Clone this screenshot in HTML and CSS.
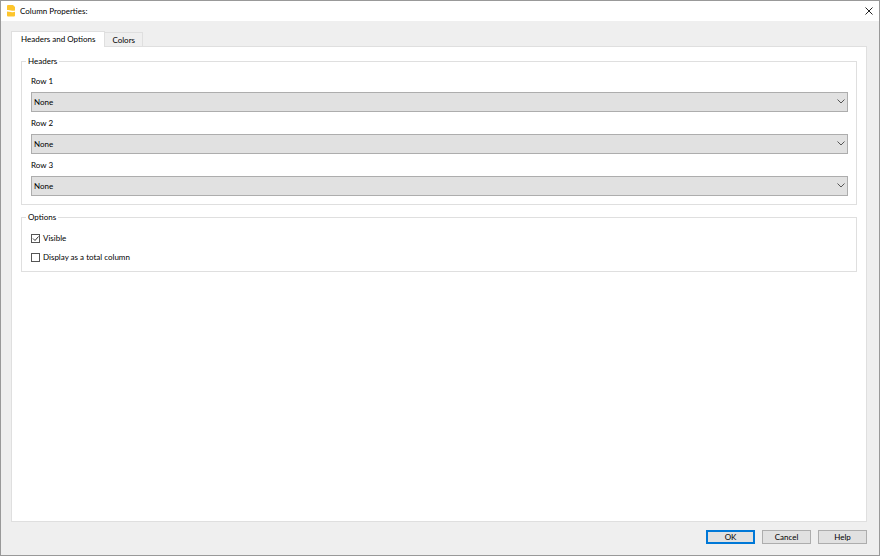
FILE: index.html
```html
<!DOCTYPE html>
<html lang="en">
    <head>
        <meta charset="utf-8">
        <title>Column Properties</title>
        <link rel="stylesheet" href="styles.css">
    </head>
    <body>
        <div class="window">

            <!-- Title bar -->
            <header class="titlebar">
                <svg class="logo" viewBox="0 0 10 12">
                    <path fill="#fdc52c" d="M2 0H7l2 2v3.500Q7 6 5 5.400T1 5V1q0-1 1-1z"/>
                    <path fill="#fdc52c" d="M1 6.400q2 0 4 .6t4-.2v3.700q0 1-1 1H2q-1 0-1-1z"/>
                </svg>
                <h1 class="title">Column Properties:</h1>
                <button class="close" type="button" aria-label="Close">
                    <svg viewBox="0 0 8 8"><path d="M.5.5l7 7M7.5.5l-7 7"/></svg>
                </button>
            </header>

            <form class="content">
                <div class="tabs" role="tablist">
                    <button class="tab active" type="button" role="tab" aria-selected="true">Headers and Options</button>
                    <button class="tab" type="button" role="tab" aria-selected="false">Colors</button>
                </div>

                <div class="panel" role="tabpanel">
                    <fieldset class="group headers">
                        <legend>Headers</legend>
                        <label for="row1">Row 1</label>
                        <div class="dropdown">
                            <select id="row1"><option>None</option></select>
                            <svg viewBox="0 0 8 5"><path d="M.5.5L4 4 7.5.5"/></svg>
                        </div>
                        <label for="row2">Row 2</label>
                        <div class="dropdown">
                            <select id="row2"><option>None</option></select>
                            <svg viewBox="0 0 8 5"><path d="M.5.5L4 4 7.5.5"/></svg>
                        </div>
                        <label for="row3">Row 3</label>
                        <div class="dropdown">
                            <select id="row3"><option>None</option></select>
                            <svg viewBox="0 0 8 5"><path d="M.5.5L4 4 7.5.5"/></svg>
                        </div>
                    </fieldset>

                    <fieldset class="group options">
                        <legend>Options</legend>
                        <div class="check">
                            <input type="checkbox" id="visible" checked>
                            <label for="visible">Visible</label>
                        </div>
                        <div class="check">
                            <input type="checkbox" id="total">
                            <label for="total">Display as a total column</label>
                        </div>
                    </fieldset>
                </div>

                <div class="buttons">
                    <button class="button default" type="submit">OK</button>
                    <button class="button" type="button">Cancel</button>
                    <button class="button" type="button">Help</button>
                </div>
            </form>
        </div>
    </body>
</html>
```

FILE: styles.css
```css
* {
    box-sizing: border-box;
}

body {
    margin: 0;
    font-family: Lato, "Open Sans", sans-serif;
    font-size: 8px;
    line-height: 12px;
    color: #000;
}

button, select, input {
    font: inherit;
    color: inherit;
    margin: 0;
}

.window {
    display: flex;
    flex-direction: column;
    min-height: 100vh;
    border: 1px solid #999;
    background-color: #efefef;
}

/* Title bar */
.titlebar {
    display: flex;
    align-items: center;
    height: 20px;
    padding: 0 6px 0 5px;
    background-color: #fff;
}

.logo {
    width: 10px;
    height: 12px;
}

.title {
    flex: 1;
    margin: 0 0 0 4px;
    font-size: 8px;
    font-weight: normal;
}

.close {
    display: flex;
    padding: 0;
    border: 0;
    background: none;
}

.close svg {
    width: 8px;
    height: 8px;
    fill: none;
    stroke: #222;
}

/* Tabs */
.content {
    flex: 1;
    display: flex;
    flex-direction: column;
    padding: 10px 12px 11px 10px;
}

.tabs {
    display: flex;
    align-items: flex-end;
}

.tab {
    height: 14px;
    padding: 0 7px;
    border: 1px solid #dfdfdf;
    border-bottom: 0;
    border-left: 0;
    background-color: #efefef;
}

.tab.active {
    position: relative;
    height: 16px;
    margin-bottom: -1px;
    padding: 0 9px 1px;
    border-left: 1px solid #dfdfdf;
    background-color: #fff;
}

.panel {
    flex: 1;
    padding: 8px 9px;
    border: 1px solid #dfdfdf;
    background-color: #fff;
}

/* Group boxes */
.group {
    min-width: 0;
    margin: 0 0 6px;
    border: 1px solid #dfdfdf;
}

.group legend {
    margin-left: -5px;
    padding: 0 2px;
}

.headers {
    padding: 6px 8px 8px 9px;
}

.headers > label {
    display: block;
    padding: 2px 0 5px;
}

.headers > label ~ label {
    padding-top: 5px;
}

.dropdown {
    position: relative;
}

.dropdown select {
    display: block;
    width: 100%;
    height: 20px;
    padding: 0 2px;
    border: 1px solid #adadad;
    border-radius: 0;
    background-color: #e1e1e1;
    appearance: none;
}

.dropdown svg {
    position: absolute;
    top: 7px;
    right: 3px;
    width: 8px;
    height: 5px;
    fill: none;
    stroke: #555;
    pointer-events: none;
}

.options {
    padding: 9px 9px 8px;
}

.check {
    display: flex;
    align-items: center;
    gap: 3px;
}

.check + .check {
    margin-top: 7px;
}

.check input {
    width: 9px;
    height: 9px;
    border: 1px solid #555;
    background-color: #fff;
    appearance: none;
}

.check input:checked {
    background-image: url("data:image/svg+xml,%3Csvg xmlns='http://www.w3.org/2000/svg' viewBox='0 0 7 7'%3E%3Cpath d='M1 3.5l2 2 3.5-4' fill='none' stroke='%23333'/%3E%3C/svg%3E");
}

/* Buttons */
.buttons {
    display: flex;
    justify-content: flex-end;
    gap: 7px;
    margin-top: 8px;
}

.button {
    width: 49px;
    height: 14px;
    padding: 0;
    border: 1px solid #adadad;
    line-height: 12px;
    background-color: #e1e1e1;
}

.button.default {
    border: 2px solid #0078d7;
    line-height: 10px;
}
```
